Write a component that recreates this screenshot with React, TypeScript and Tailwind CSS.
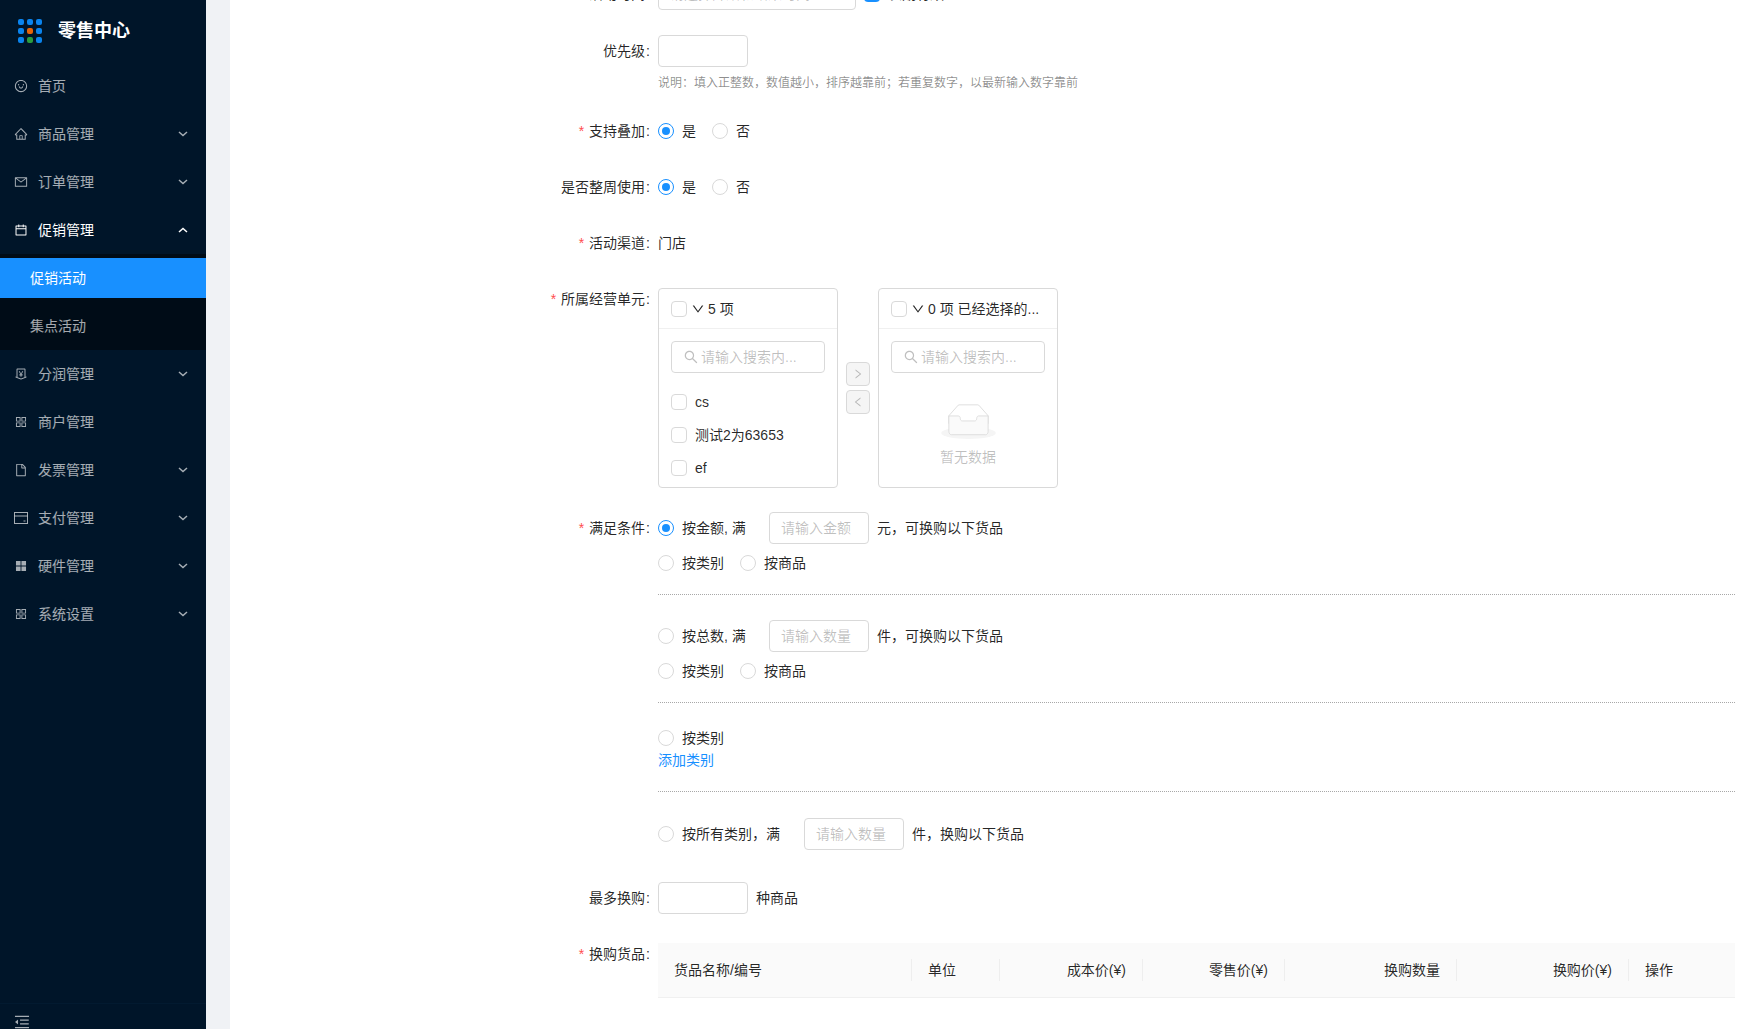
import React from "react";
import {
  AiOutlineSmile,
  AiOutlineHome,
  AiOutlineMail,
  AiOutlineCalendar,
  AiOutlineMoneyCollect,
  AiOutlineAppstore,
  AiOutlineFile,
  AiFillAppstore,
  AiOutlineMenuFold,
  AiOutlineDown,
  AiOutlineLeft,
  AiOutlineRight,
  AiOutlineSearch,
} from "react-icons/ai";

function Chevron({ up }: { up?: boolean }) {
  return (
    <svg width="10" height="6" viewBox="0 0 10 6" fill="none" stroke="currentColor" strokeWidth="1.5" className="ml-auto mr-[18px]">
      <path d={up ? "M1 5 L5 1.5 L9 5" : "M1 1 L5 4.5 L9 1"} />
    </svg>
  );
}

function PayIcon() {
  return (
    <svg width="14" height="12" viewBox="0 0 14 12" fill="none" stroke="currentColor" strokeWidth="1">
      <rect x="0.5" y="0.5" width="13" height="11" />
      <path d="M0.5 4 H13.5" />
      <path d="M9.5 9 H11.5" />
    </svg>
  );
}

function MenuRow({ icon, label, arrow, up, active }: { icon: React.ReactNode; label: string; arrow?: boolean; up?: boolean; active?: boolean }) {
  return (
    <div className={`flex h-12 items-center pl-[14px] text-sm ${active ? "text-white" : "text-white/65"}`}>
      <span className="mr-[10px] flex w-[14px] justify-center text-base">{icon}</span>
      <span>{label}</span>
      {arrow && <Chevron up={up} />}
    </div>
  );
}

function Logo() {
  const colors = ["#0a84ee", "#0a84ee", "#0a84ee", "#0a84ee", "#e8650a", "#0a84ee", "#0a84ee", "#2a9d3f", "#0a84ee"];
  return (
    <div className="grid w-6 grid-cols-3 gap-[3px]">
      {colors.map((c, i) => (
        <span key={i} className="h-[6px] w-[6px] rounded-[2px]" style={{ backgroundColor: c }} />
      ))}
    </div>
  );
}

function Sidebar() {
  return (
    <aside className="flex h-full w-[206px] shrink-0 flex-col bg-[#001529]">
      <div className="flex h-[62px] items-center pl-[18px]">
        <Logo />
        <span className="ml-4 text-lg font-bold text-white">零售中心</span>
      </div>
      <MenuRow icon={<AiOutlineSmile />} label="首页" />
      <MenuRow icon={<AiOutlineHome />} label="商品管理" arrow />
      <MenuRow icon={<AiOutlineMail />} label="订单管理" arrow />
      <MenuRow icon={<AiOutlineCalendar />} label="促销管理" arrow up active />
      <div className="bg-[#000c17] pb-1 pt-1 text-sm">
        <div className="flex h-10 items-center bg-[#1890ff] pl-[30px] text-white">促销活动</div>
        <div className="mt-2 flex h-10 items-center pl-[30px] text-white/65">集点活动</div>
      </div>
      <MenuRow icon={<AiOutlineMoneyCollect />} label="分润管理" arrow />
      <MenuRow icon={<AiOutlineAppstore />} label="商户管理" />
      <MenuRow icon={<AiOutlineFile />} label="发票管理" arrow />
      <MenuRow icon={<PayIcon />} label="支付管理" arrow />
      <MenuRow icon={<AiFillAppstore />} label="硬件管理" arrow />
      <MenuRow icon={<AiOutlineAppstore />} label="系统设置" arrow />
      <div className="mt-auto h-[26px] shrink-0 border-t border-[#021a30] pl-[13px] pt-[9px] text-white/65">
        <AiOutlineMenuFold className="text-lg" />
      </div>
    </aside>
  );
}

function Label({ text, required, h = "h-8" }: { text?: string; required?: boolean; h?: string }) {
  return (
    <div className={`flex w-[428px] shrink-0 items-center justify-end pr-2 text-sm ${h}`}>
      {required && <span className="mr-[5px] text-[#ff4d4f]">*</span>}
      {text}
      {text && <span className="ml-px">:</span>}
    </div>
  );
}

function Radio({ checked, label, className = "" }: { checked?: boolean; label: string; className?: string }) {
  return (
    <span className={`flex items-center ${className}`}>
      <span className={`flex h-4 w-4 shrink-0 items-center justify-center rounded-full border bg-white ${checked ? "border-[#1890ff]" : "border-[#d9d9d9]"}`}>
        {checked && <span className="h-2 w-2 rounded-full bg-[#1890ff]" />}
      </span>
      <span className="ml-2 text-sm">{label}</span>
    </span>
  );
}

function TextBox({ placeholder, w }: { placeholder?: string; w: string }) {
  return (
    <div className={`flex h-8 shrink-0 items-center rounded-sm border border-[#d9d9d9] bg-white px-[11px] text-sm text-black/25 ${w}`}>
      {placeholder}
    </div>
  );
}

function Checkbox({ className = "" }: { className?: string }) {
  return <span className={`block h-4 w-4 shrink-0 rounded-sm border border-[#d9d9d9] bg-white ${className}`} />;
}

function SearchBox() {
  return (
    <div className="flex h-8 items-center rounded-sm border border-[#d9d9d9] px-[11px] text-sm text-black/25">
      <AiOutlineSearch className="mr-[2px] text-base" />
      <span>请输入搜索内...</span>
    </div>
  );
}

function TransferHeader({ text }: { text: string }) {
  return (
    <div className="flex h-10 items-center border-b border-[#f0f0f0] px-3 text-sm">
      <Checkbox />
      <AiOutlineDown className="ml-1 mr-[3px] text-sm" />
      <span className="whitespace-pre">{text}</span>
    </div>
  );
}

function EmptyImage() {
  return (
    <svg width="55" height="35" viewBox="0 0 64 41">
      <g transform="translate(0 1)" fill="none" fillRule="evenodd">
        <ellipse fill="#f5f5f5" cx="32" cy="33" rx="32" ry="7" />
        <g fillRule="nonzero" stroke="#d9d9d9">
          <path d="M55 12.76L44.854 1.258C44.367.474 43.656 0 42.907 0H21.093c-.749 0-1.46.474-1.947 1.257L9 12.761V22h46v-9.24z" />
          <path d="M41.613 15.931c0-1.605.994-2.93 2.227-2.931H55v18.137C55 33.26 53.68 35 52.05 35h-40.1C10.32 35 9 33.259 9 31.137V13h11.16c1.233 0 2.227 1.323 2.227 2.928v.022c0 1.605 1.005 2.901 2.237 2.901h14.752c1.232 0 2.237-1.308 2.237-2.913v-.007z" fill="#fafafa" />
        </g>
      </g>
    </svg>
  );
}

function Transfer() {
  return (
    <div className="flex h-[200px] items-center">
      <div className="h-[200px] w-[180px] overflow-hidden rounded-sm border border-[#d9d9d9]">
        <TransferHeader text="5 项" />
        <div className="px-3 pt-3">
          <SearchBox />
        </div>
        <div className="mt-3 px-3 text-sm">
          {["cs", "测试2为63653", "ef"].map((t) => (
            <div key={t} className="flex h-[33px] items-center">
              <Checkbox className="mr-2" />
              {t}
            </div>
          ))}
        </div>
      </div>
      <div className="mx-2 flex w-6 flex-col gap-1 text-xs text-black/25">
        <span className="flex h-6 w-6 items-center justify-center rounded-sm border border-[#d9d9d9] bg-[#f5f5f5]"><AiOutlineRight /></span>
        <span className="flex h-6 w-6 items-center justify-center rounded-sm border border-[#d9d9d9] bg-[#f5f5f5]"><AiOutlineLeft /></span>
      </div>
      <div className="h-[200px] w-[180px] overflow-hidden rounded-sm border border-[#d9d9d9]">
        <TransferHeader text="0 项 已经选择的..." />
        <div className="px-3 pt-3">
          <SearchBox />
        </div>
        <div className="mt-[31px] flex flex-col items-center text-sm text-black/25">
          <EmptyImage />
          <div className="mt-2">暂无数据</div>
        </div>
      </div>
    </div>
  );
}

function Dotted({ className = "" }: { className?: string }) {
  return <div className={`border-t border-dotted border-[#a8a8a8] ${className}`} />;
}

function Conditions() {
  return (
    <div className="min-w-0 flex-1 text-sm">
      <div className="flex h-8 items-center">
        <Radio checked label="按金额, 满" className="w-[111px]" />
        <TextBox placeholder="请输入金额" w="w-[100px]" />
        <span className="ml-2">元，可换购以下货品</span>
      </div>
      <div className="mt-2 flex h-[22px] items-center gap-4">
        <Radio label="按类别" />
        <Radio label="按商品" />
      </div>
      <Dotted className="mt-5" />
      <div className="mt-[25px] flex h-8 items-center">
        <Radio label="按总数, 满" className="w-[111px]" />
        <TextBox placeholder="请输入数量" w="w-[100px]" />
        <span className="ml-2">件，可换购以下货品</span>
      </div>
      <div className="mt-2 flex h-[22px] items-center gap-4">
        <Radio label="按类别" />
        <Radio label="按商品" />
      </div>
      <Dotted className="mt-5" />
      <div className="mt-6 flex h-[22px] items-center">
        <Radio label="按类别" />
      </div>
      <div className="h-[22px] leading-[22px] text-[#1890ff]">添加类别</div>
      <Dotted className="mt-5" />
      <div className="mt-[26px] flex h-8 items-center">
        <Radio label="按所有类别，满" className="w-[146px]" />
        <TextBox placeholder="请输入数量" w="w-[100px]" />
        <span className="ml-2">件，换购以下货品</span>
      </div>
    </div>
  );
}

function GoodsTable() {
  const cols = [
    { t: "货品名称/编号" },
    { t: "单位" },
    { t: "成本价(¥)", right: true },
    { t: "零售价(¥)", right: true },
    { t: "换购数量", right: true },
    { t: "换购价(¥)", right: true },
    { t: "操作" },
  ];
  return (
    <div className="grid h-[55px] min-w-0 flex-1 grid-cols-[254px_88px_143px_142px_172px_172px_1fr] items-center border-b border-[#f0f0f0] bg-[#fafafa] text-sm">
      {cols.map((c, i) => (
        <div key={c.t} className={`h-[22px] px-4 leading-[22px] ${c.right ? "text-right" : ""} ${i < cols.length - 1 ? "border-r border-[#eeeeee]" : ""}`}>
          {c.t}
        </div>
      ))}
    </div>
  );
}

export default function App() {
  return (
    <div className="flex h-[1029px] overflow-hidden font-['Liberation_Sans','Noto_Sans_CJK_SC',sans-serif] text-black/85">
      <Sidebar />
      <div className="w-6 shrink-0 bg-[#f0f2f5]" />
      <main className="min-w-0 flex-1 overflow-hidden bg-white pr-[11px]">
        <div className="-mt-[22px] mb-[25px] flex">
          <Label text="活动时间" />
          <div className="flex h-8 w-[198px] items-center justify-between rounded-sm border border-[#d9d9d9] px-[11px] text-sm text-black/25">
            <span>请选择开始和结束时间</span>
            <AiOutlineCalendar className="text-sm" />
          </div>
          <div className="ml-2 flex items-center text-sm">
            <span className="h-4 w-4 rounded-sm bg-[#1890ff]" />
            <span className="ml-2">长期有效</span>
          </div>
        </div>

        <div className="mb-[21px] flex">
          <Label text="优先级" />
          <div>
            <TextBox w="w-[90px]" />
            <div className="mt-[5px] text-xs leading-[22px] text-black/45">说明：填入正整数，数值越小，排序越靠前；若重复数字，以最新输入数字靠前</div>
          </div>
        </div>

        <div className="mb-6 flex">
          <Label text="支持叠加" required />
          <div className="flex h-8 items-center gap-4">
            <Radio checked label="是" />
            <Radio label="否" />
          </div>
        </div>

        <div className="mb-6 flex">
          <Label text="是否整周使用" />
          <div className="flex h-8 items-center gap-4">
            <Radio checked label="是" />
            <Radio label="否" />
          </div>
        </div>

        <div className="mb-[29px] flex">
          <Label text="活动渠道" required />
          <div className="flex h-8 items-center text-sm">门店</div>
        </div>

        <div className="mb-6 flex">
          <Label text="所属经营单元" required h="h-[22px]" />
          <Transfer />
        </div>

        <div className="mb-8 flex">
          <Label text="满足条件" required />
          <Conditions />
        </div>

        <div className="mb-[29px] flex">
          <Label text="最多换购" />
          <div className="flex h-8 items-center text-sm">
            <TextBox w="w-[90px]" />
            <span className="ml-2">种商品</span>
          </div>
        </div>

        <div className="flex">
          <Label text="换购货品" required h="h-[22px]" />
          <GoodsTable />
        </div>
      </main>
    </div>
  );
}
